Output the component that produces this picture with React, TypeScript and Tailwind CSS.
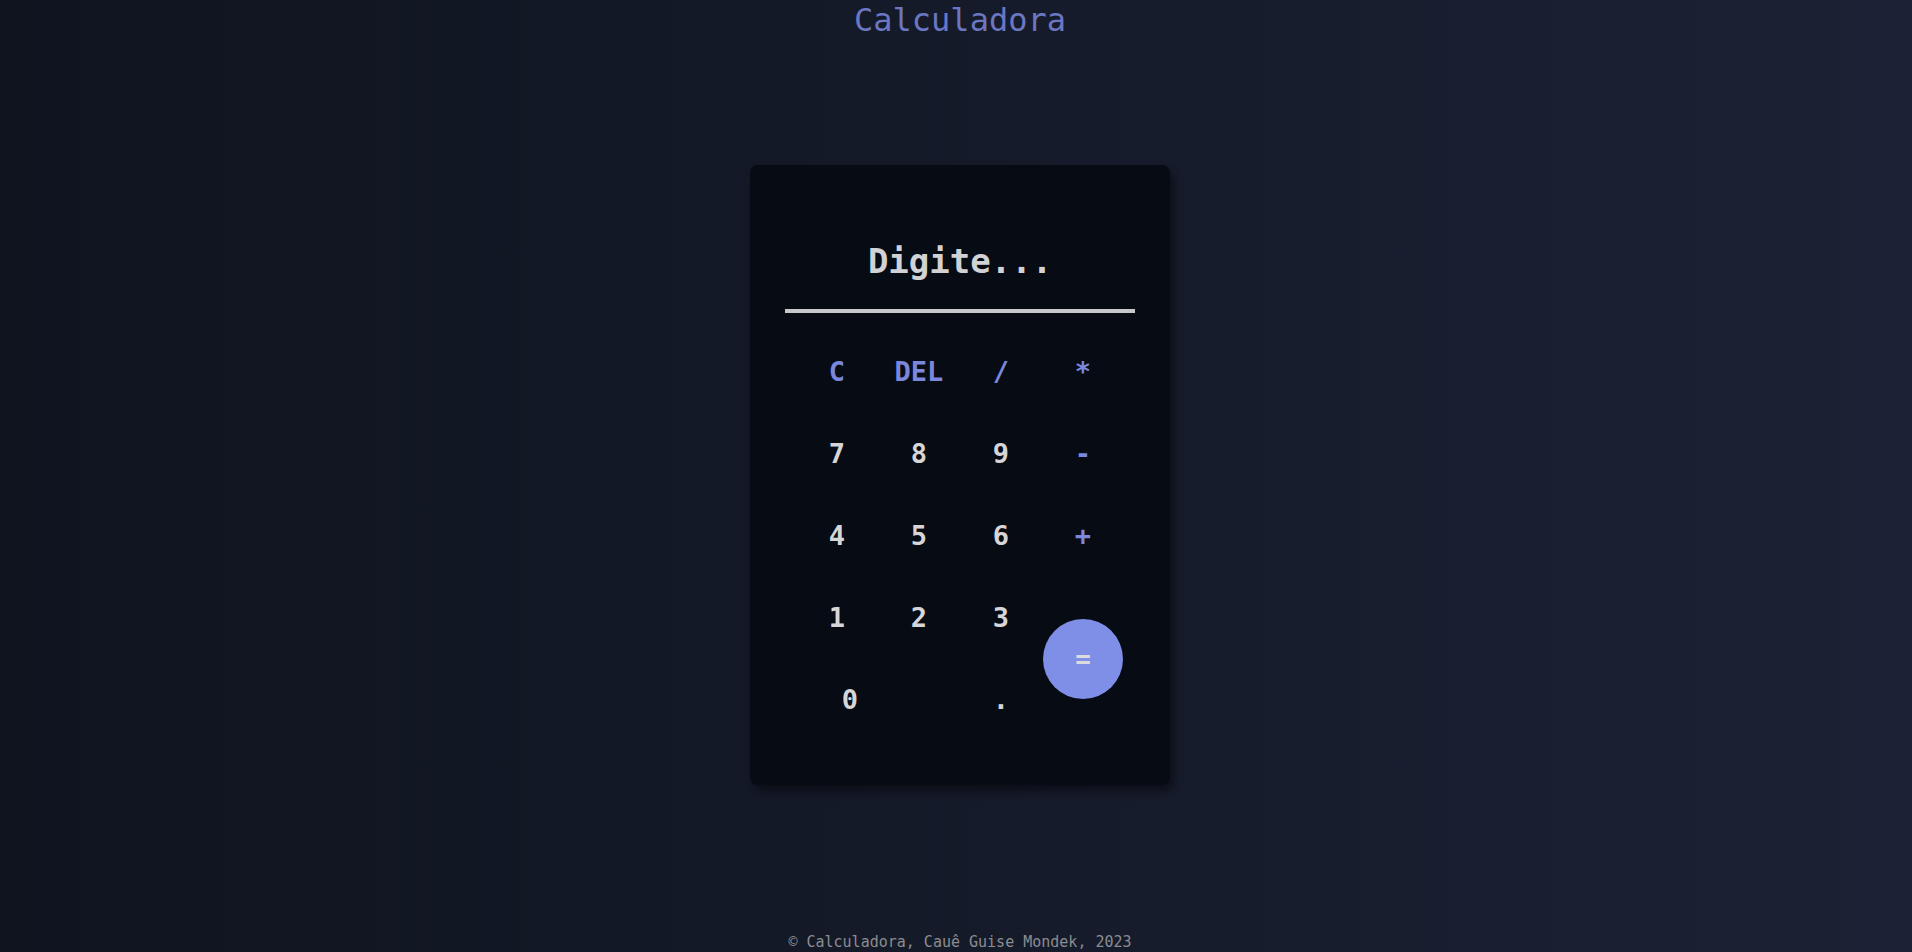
const keys: { label: string; kind: 'op' | 'num' }[] = [
  { label: 'C', kind: 'op' },
  { label: 'DEL', kind: 'op' },
  { label: '/', kind: 'op' },
  { label: '*', kind: 'op' },
  { label: '7', kind: 'num' },
  { label: '8', kind: 'num' },
  { label: '9', kind: 'num' },
  { label: '-', kind: 'op' },
  { label: '4', kind: 'num' },
  { label: '5', kind: 'num' },
  { label: '6', kind: 'num' },
  { label: '+', kind: 'op' },
  { label: '1', kind: 'num' },
  { label: '2', kind: 'num' },
  { label: '3', kind: 'num' },
]

const mono = { fontFamily: '"DejaVu Sans Mono", "Liberation Mono", monospace' }

export default function App() {
  return (
    <div
      className="min-h-screen flex flex-col items-center pl-2 bg-linear-to-r from-[#0f141f] to-[#1c2135]"
      style={mono}
    >
      <h1 className="text-[32px] leading-[40px] text-[#6b77c2]">Calculadora</h1>

      {/* calculator card */}
      <div className="mt-[125px] w-[420px] h-[620px] rounded-lg bg-[#060b14] shadow-[4px_6px_10px_rgba(0,0,0,0.45)] flex flex-col items-center pt-[76px]">
        <div className="text-[34px] leading-[40px] font-bold text-[#d2d2d4]">Digite...</div>
        <div className="mt-[28px] w-[350px] h-1 bg-[#c8c8ca]" />

        <div className="mt-[18px] grid grid-cols-[repeat(4,82px)] grid-rows-[repeat(5,82px)]">
          {keys.map((k) => (
            <button
              key={k.label}
              className={`flex items-center justify-center text-[27px] font-bold ${
                k.kind === 'op' ? 'text-[#7a87dd]' : 'text-[#d6d6d8]'
              }`}
            >
              {k.label}
            </button>
          ))}
          <div className="row-span-2 flex items-center justify-center">
            <button className="w-20 h-20 rounded-full bg-[#7f8ee6] text-[#dcdce0] text-[26px] font-bold flex items-center justify-center">
              =
            </button>
          </div>
          <button className="flex items-center justify-center pl-[26px] text-[27px] font-bold text-[#d6d6d8]">
            0
          </button>
          <div />
          <button className="flex items-center justify-center text-[27px] font-bold text-[#d6d6d8]">
            .
          </button>
        </div>
      </div>

      <footer className="mt-auto text-[15px] leading-[20px] text-[#8c8c90]">
        © Calculadora, Cauê Guise Mondek, 2023
      </footer>
    </div>
  )
}
